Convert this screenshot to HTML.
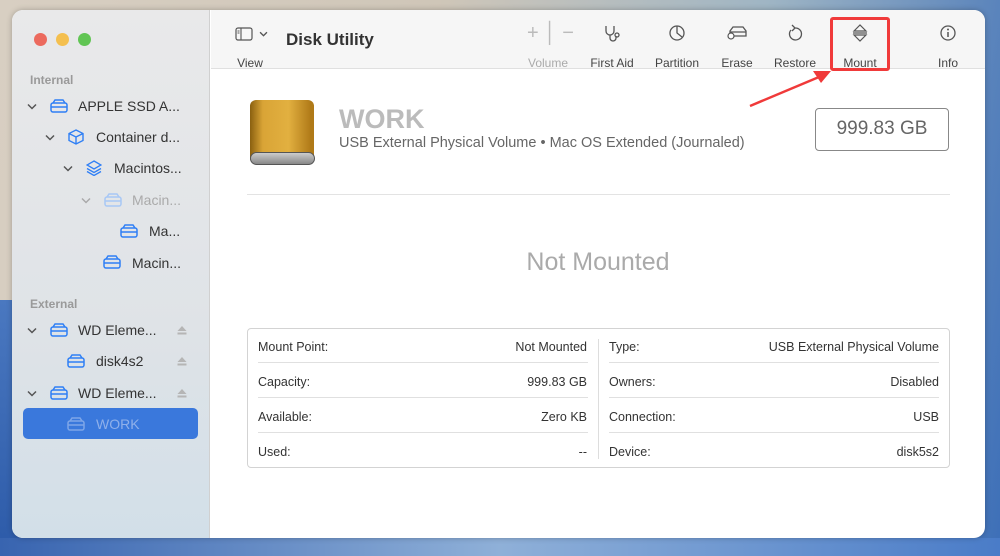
<!DOCTYPE html>
<html><head><meta charset="utf-8"><style>
*{margin:0;padding:0;box-sizing:border-box}
body{width:1000px;height:556px;overflow:hidden;font-family:"Liberation Sans",sans-serif;background:linear-gradient(100deg,#d8cfc2 0%,#cfc6b8 40%,#9fb5c4 70%,#3d6fb8 100%);position:relative}
.bg2{position:absolute;left:0;top:300px;width:40px;height:256px;background:linear-gradient(#4a78c0,#2c5aa8)}
.bg3{position:absolute;left:0;top:538px;width:1000px;height:18px;background:linear-gradient(90deg,#3864b0,#8fb0d8,#4a7cc8)}
.win{position:absolute;left:12px;top:10px;width:973px;height:528px;border-radius:11px;overflow:hidden;background:#fff;box-shadow:0 0 6px rgba(0,0,0,.25)}
.side{position:absolute;left:0;top:0;width:198px;height:528px;background:linear-gradient(#e9e9ea,#dfe3e7 60%,#d2dfe8);border-right:1px solid #d0d0d0}
.dot{position:absolute;top:23px;width:13px;height:13px;border-radius:50%}
.sec{position:absolute;left:18px;font-size:12px;color:#9a9a9a;font-weight:bold}
.it{position:absolute;font-size:14px;color:#333;white-space:nowrap}
.chev{position:absolute;width:10px;height:7px}
.top{position:absolute;left:199px;top:0;right:0;height:59px;background:#f6f6f6;border-bottom:1px solid #e0e0e0}
.tb{position:absolute;top:46px;font-size:12px;color:#444;transform:translateX(-50%);white-space:nowrap}
.ic{position:absolute;top:14px;transform:translateX(-50%)}
.tbl{position:absolute;left:235px;top:318px;width:703px;height:140px;border:1px solid #d3d3d3;border-radius:4px}
.r{position:absolute;font-size:12.5px;color:#333}
.hl{position:absolute;height:1px;background:#e0e0e0}
.ej{position:absolute;width:10px;height:10px}
</style></head><body>
<div class="bg2"></div><div class="bg3"></div>
<div class="win">
<div class="side">
<div class="dot" style="left:22px;background:#ec6a5e"></div>
<div class="dot" style="left:44px;background:#f4bf4f"></div>
<div class="dot" style="left:66px;background:#61c554"></div>
<div class="sec" style="top:63px">Internal</div>
<svg class="chev" style="left:15px;top:93px" viewBox="0 0 10 7"><path d="M1 1.5 L5 5.5 L9 1.5" fill="none" stroke="#555" stroke-width="1.5"/></svg>
<svg style="position:absolute;left:38px;top:89px" width="18" height="14"><rect x="1" y="4" width="16" height="9" rx="2" fill="none" stroke="#2f7ff5" stroke-width="1.5"/><path d="M3 4 L5 1 H13 L15 4 M1 8 H17" fill="none" stroke="#2f7ff5" stroke-width="1.5"/></svg>
<div class="it" style="left:66px;top:88px">APPLE SSD A...</div>
<svg class="chev" style="left:33px;top:124px" viewBox="0 0 10 7"><path d="M1 1.5 L5 5.5 L9 1.5" fill="none" stroke="#555" stroke-width="1.5"/></svg>
<svg style="position:absolute;left:56px;top:119px" width="16" height="16"><path d="M8 1 L15 4.5 V11.5 L8 15 L1 11.5 V4.5 Z M1 4.5 L8 8 L15 4.5 M8 8 V15" fill="none" stroke="#2f7ff5" stroke-width="1.4"/></svg>
<div class="it" style="left:84px;top:119px">Container d...</div>
<svg class="chev" style="left:51px;top:155px" viewBox="0 0 10 7"><path d="M1 1.5 L5 5.5 L9 1.5" fill="none" stroke="#555" stroke-width="1.5"/></svg>
<svg style="position:absolute;left:74px;top:150px" width="16" height="16"><path d="M8 1 L15 5 L8 9 L1 5 Z M1 8.5 L8 12.5 L15 8.5 M1 11.5 L8 15.5 L15 11.5" fill="none" stroke="#2f7ff5" stroke-width="1.3"/></svg>
<div class="it" style="left:102px;top:150px">Macintos...</div>
<svg class="chev" style="left:69px;top:187px" viewBox="0 0 10 7"><path d="M1 1.5 L5 5.5 L9 1.5" fill="none" stroke="#aaa" stroke-width="1.5"/></svg>
<svg style="position:absolute;left:92px;top:183px" width="18" height="14"><rect x="1" y="4" width="16" height="9" rx="2" fill="none" stroke="#a8c8f5" stroke-width="1.5"/><path d="M3 4 L5 1 H13 L15 4 M1 8 H17" fill="none" stroke="#a8c8f5" stroke-width="1.5"/></svg>
<div class="it" style="left:120px;top:182px;color:#aaa">Macin...</div>
<svg style="position:absolute;left:108px;top:214px" width="18" height="14"><rect x="1" y="4" width="16" height="9" rx="2" fill="none" stroke="#2f7ff5" stroke-width="1.5"/><path d="M3 4 L5 1 H13 L15 4 M1 8 H17" fill="none" stroke="#2f7ff5" stroke-width="1.5"/></svg>
<div class="it" style="left:137px;top:213px">Ma...</div>
<svg style="position:absolute;left:91px;top:245px" width="18" height="14"><rect x="1" y="4" width="16" height="9" rx="2" fill="none" stroke="#2f7ff5" stroke-width="1.5"/><path d="M3 4 L5 1 H13 L15 4 M1 8 H17" fill="none" stroke="#2f7ff5" stroke-width="1.5"/></svg>
<div class="it" style="left:120px;top:245px">Macin...</div>
<div class="sec" style="top:287px">External</div>
<svg class="chev" style="left:15px;top:317px" viewBox="0 0 10 7"><path d="M1 1.5 L5 5.5 L9 1.5" fill="none" stroke="#555" stroke-width="1.5"/></svg>
<svg style="position:absolute;left:38px;top:313px" width="18" height="14"><rect x="1" y="4" width="16" height="9" rx="2" fill="none" stroke="#2f7ff5" stroke-width="1.5"/><path d="M3 4 L5 1 H13 L15 4 M1 8 H17" fill="none" stroke="#2f7ff5" stroke-width="1.5"/></svg>
<div class="it" style="left:66px;top:312px">WD Eleme...</div>
<svg class="ej" style="left:165px;top:315px" viewBox="0 0 10 10"><path d="M5 1 L9.5 6 H0.5 Z" fill="#b5b5b5"/><rect x="0.5" y="7.5" width="9" height="2" fill="#b5b5b5"/></svg>
<svg style="position:absolute;left:55px;top:344px" width="18" height="14"><rect x="1" y="4" width="16" height="9" rx="2" fill="none" stroke="#2f7ff5" stroke-width="1.5"/><path d="M3 4 L5 1 H13 L15 4 M1 8 H17" fill="none" stroke="#2f7ff5" stroke-width="1.5"/></svg>
<div class="it" style="left:84px;top:343px">disk4s2</div>
<svg class="ej" style="left:165px;top:346px" viewBox="0 0 10 10"><path d="M5 1 L9.5 6 H0.5 Z" fill="#b5b5b5"/><rect x="0.5" y="7.5" width="9" height="2" fill="#b5b5b5"/></svg>
<svg class="chev" style="left:15px;top:380px" viewBox="0 0 10 7"><path d="M1 1.5 L5 5.5 L9 1.5" fill="none" stroke="#555" stroke-width="1.5"/></svg>
<svg style="position:absolute;left:38px;top:376px" width="18" height="14"><rect x="1" y="4" width="16" height="9" rx="2" fill="none" stroke="#2f7ff5" stroke-width="1.5"/><path d="M3 4 L5 1 H13 L15 4 M1 8 H17" fill="none" stroke="#2f7ff5" stroke-width="1.5"/></svg>
<div class="it" style="left:66px;top:375px">WD Eleme...</div>
<svg class="ej" style="left:165px;top:378px" viewBox="0 0 10 10"><path d="M5 1 L9.5 6 H0.5 Z" fill="#b5b5b5"/><rect x="0.5" y="7.5" width="9" height="2" fill="#b5b5b5"/></svg>
<div style="position:absolute;left:11px;top:398px;width:175px;height:31px;border-radius:5px;background:#3a78dc"></div>
<svg style="position:absolute;left:55px;top:407px" width="18" height="14"><rect x="1" y="4" width="16" height="9" rx="2" fill="none" stroke="#7ea6e8" stroke-width="1.5"/><path d="M3 4 L5 1 H13 L15 4 M1 8 H17" fill="none" stroke="#7ea6e8" stroke-width="1.5"/></svg>
<div class="it" style="left:84px;top:406px;color:#8fb0ea">WORK</div>
</div>
<div class="top">
<svg class="ic" style="left:33px;top:17px" width="18" height="14"><rect x="1" y="1" width="16" height="12" rx="2" fill="none" stroke="#555" stroke-width="1.2"/><path d="M6 1 V13 M2.5 4 H4.5 M2.5 6 H4.5" stroke="#555" stroke-width="1.1"/></svg>
<svg style="position:absolute;left:48px;top:21px" width="9" height="6" viewBox="0 0 10 7"><path d="M1 1.5 L5 5.5 L9 1.5" fill="none" stroke="#555" stroke-width="1.6"/></svg>
<div class="tb" style="left:39px">View</div>
<div class="it" style="left:75px;top:20px;font-size:17px;font-weight:bold;color:#333">Disk Utility</div>
<div class="it" style="left:316px;top:12px;font-size:20px;color:#bbb;font-weight:300">+ │ −</div>
<div class="tb" style="left:337px;color:#aaa">Volume</div>
<svg class="ic" style="left:402px" width="20" height="20"><path d="M3 2 V7 A4 4 0 0 0 11 7 V2 M7 11 V14 A3 3 0 0 0 13 14 V12" fill="none" stroke="#555" stroke-width="1.3"/><circle cx="14" cy="11" r="2" fill="none" stroke="#555" stroke-width="1.3"/></svg>
<div class="tb" style="left:401px">First Aid</div>
<svg class="ic" style="left:466px" width="18" height="18"><circle cx="9" cy="9" r="7" fill="none" stroke="#555" stroke-width="1.3"/><path d="M9 2 V9 L14 13" fill="none" stroke="#555" stroke-width="1.3"/></svg>
<div class="tb" style="left:466px">Partition</div>
<svg class="ic" style="left:526px" width="22" height="16"><path d="M4 7 L7 3 H17 L20 7 V12 H4 Z M4 8 H20" fill="none" stroke="#555" stroke-width="1.3"/><circle cx="5" cy="12" r="3" fill="#fff" stroke="#555" stroke-width="1.2"/></svg>
<div class="tb" style="left:526px">Erase</div>
<svg class="ic" style="left:584px" width="18" height="18"><path d="M5 6 A6 6 0 1 0 9 4 M9 4 L6 1 M9 4 L6 7" fill="none" stroke="#555" stroke-width="1.3"/></svg>
<div class="tb" style="left:584px">Restore</div>
<svg class="ic" style="left:649px" width="18" height="18"><path d="M3 7 L9 1 L15 7 Z M3 11 L9 17 L15 11 Z M2 9 H16" fill="none" stroke="#555" stroke-width="1.2"/></svg>
<div class="tb" style="left:649px">Mount</div>
<svg class="ic" style="left:737px" width="18" height="18"><circle cx="9" cy="9" r="7" fill="none" stroke="#555" stroke-width="1.3"/><path d="M9 8 V13" stroke="#555" stroke-width="1.5"/><circle cx="9" cy="5.5" r="1" fill="#555"/></svg>
<div class="tb" style="left:737px">Info</div>
</div>
<div style="position:absolute;left:818px;top:7px;width:60px;height:54px;border:3px solid #f03a3a;border-radius:3px"></div>
<svg style="position:absolute;left:735px;top:55px" width="90" height="45"><path d="M3 41 L72 12" stroke="#f03a3a" stroke-width="2.5"/><path d="M84 6 L66 6 L74 18 Z" fill="#f03a3a"/></svg>
<div style="position:absolute;left:238px;top:90px;width:64px;height:64px;border-radius:6px;background:linear-gradient(90deg,#8a6010,#d9a436 20%,#e2b040 60%,#b07a18 95%)"></div>
<div style="position:absolute;left:238px;top:142px;width:65px;height:13px;border-radius:7px;background:linear-gradient(#ccc,#888);border:1px solid #555"></div>
<div class="it" style="left:327px;top:94px;font-size:27px;font-weight:bold;color:#bbb">WORK</div>
<div class="it" style="left:327px;top:125px;font-size:14.5px;color:#666">USB External Physical Volume • Mac OS Extended (Journaled)</div>
<div style="position:absolute;left:803px;top:98px;width:134px;height:43px;border:1.5px solid #888;border-radius:4px;font-size:19px;color:#666;text-align:center;line-height:40px">999.83 GB</div>
<div class="hl" style="left:235px;top:184px;width:703px;background:#e3e3e3"></div>
<div class="it" style="left:0;width:1172px;text-align:center;top:238px;font-size:25px;color:#aaa;">Not Mounted</div>
<div class="tbl">
<div style="position:absolute;left:350px;top:10px;width:1px;height:120px;background:#ddd"></div>
<div class="hl" style="left:10px;top:33px;width:330px"></div><div class="hl" style="left:361px;top:33px;width:330px"></div>
<div class="hl" style="left:10px;top:68px;width:330px"></div><div class="hl" style="left:361px;top:68px;width:330px"></div>
<div class="hl" style="left:10px;top:103px;width:330px"></div><div class="hl" style="left:361px;top:103px;width:330px"></div>
<div class="r" style="left:10px;top:11px">Mount Point:</div><div class="r" style="right:362px;top:11px">Not Mounted</div>
<div class="r" style="left:361px;top:11px">Type:</div><div class="r" style="right:10px;top:11px">USB External Physical Volume</div>
<div class="r" style="left:10px;top:46px">Capacity:</div><div class="r" style="right:362px;top:46px">999.83 GB</div>
<div class="r" style="left:361px;top:46px">Owners:</div><div class="r" style="right:10px;top:46px">Disabled</div>
<div class="r" style="left:10px;top:81px">Available:</div><div class="r" style="right:362px;top:81px">Zero KB</div>
<div class="r" style="left:361px;top:81px">Connection:</div><div class="r" style="right:10px;top:81px">USB</div>
<div class="r" style="left:10px;top:116px">Used:</div><div class="r" style="right:362px;top:116px">--</div>
<div class="r" style="left:361px;top:116px">Device:</div><div class="r" style="right:10px;top:116px">disk5s2</div>
</div>
</div>
</body></html>
